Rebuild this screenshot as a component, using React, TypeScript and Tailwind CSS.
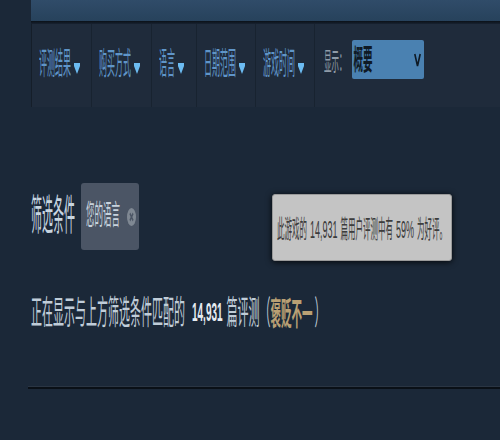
import React from "react";

const font = "font-['Liberation_Sans','Noto_Sans_CJK_SC',sans-serif]";

const tabs = [
  { label: "评测结果", w: "w-[60px]" },
  { label: "购买方式", w: "w-[60px]" },
  { label: "语言", w: "w-[45px]" },
  { label: "日期范围", w: "w-[59px]" },
  { label: "游戏时间", w: "w-[59px]" },
];

const Caret = () => (
  <svg width="6" height="11" viewBox="0 0 6 11" className="ml-[3px] mt-[5px]">
    <polygon points="0,0 6,0 6,3 3,11 0,3" fill="#6cbcf2" />
  </svg>
);

const FilterBar: React.FC = () => (
  <div className="ml-[31px]">
    <div className="h-[21px] bg-linear-to-b from-[#304c69] to-[#27425c]" />
    <div className="h-[3px] bg-linear-to-b from-[#0b1118] to-[#172231]" />
    <div className="flex h-[83px] bg-[#1f2b3b] border-l border-[#151e29]">
      {tabs.map((t) => (
        <div
          key={t.label}
          className={`${t.w} flex items-center pl-[7px] border-r border-[#182330]`}
        >
          <span className="inline-block text-[8px] leading-none scale-y-[3.8] text-[#5f95c8]">
            {t.label}
          </span>
          <Caret />
        </div>
      ))}
      <span className="ml-[9px] mt-[-5px] self-center inline-block text-[7.5px] leading-none scale-y-[3.5] text-[#8f9ba7]">
        显示：
      </span>
      <div className="ml-[5px] mt-[16px] self-start w-[72px] h-[39px] rounded-[2px] bg-[#4a81b1] flex items-center justify-between pl-[2px] pr-[3px]">
        <span className="inline-block text-[9.5px] font-bold leading-none scale-y-[3] text-[#0f1a25]">
          概要
        </span>
        <svg width="7" height="14" viewBox="0 0 7 14">
          <polyline points="0.8,1 3.5,13 6.2,1" fill="none" stroke="#0f1a25" strokeWidth="1.6" />
        </svg>
      </div>
    </div>
  </div>
);

const App: React.FC = () => {
  return (
    <div className={`relative w-[500px] h-[440px] overflow-hidden bg-[#1b2838] ${font}`}>
      <FilterBar />

      <div className="pl-[31px]">
        <div className="mt-[76px] flex items-center h-[67px]">
          <span className="inline-block text-[11px] leading-none scale-y-[3.8] text-[#c7d5e0]">
            筛选条件
          </span>
          <div className="ml-[6px] w-[58px] h-[67px] rounded-[3px] bg-[#4b5565] flex items-center pl-[5px]">
            <span className="inline-block text-[8.5px] leading-none scale-y-[3.3] text-[#c8d3dd]">
              您的语言
            </span>
            <svg width="9" height="18" viewBox="0 0 10 10" preserveAspectRatio="none" className="ml-[7px]">
              <circle cx="5" cy="5" r="5" fill="#7f8893" />
              <path d="M3.2 3 L6.8 7 M6.8 3 L3.2 7" stroke="#4b5565" strokeWidth="1.3" />
            </svg>
          </div>
        </div>

        <div className="mt-[49px] h-[28px] flex items-center">
          <span className="inline-block text-[11px] leading-none scale-y-[3] text-[#c0cdd9]">
            正在显示与上方筛选条件匹配的
          </span>
          <span className="ml-[7px] inline-block text-[10px] font-bold leading-none scale-y-[2.5] text-[#e6ecf2]">
            14,931
          </span>
          <span className="ml-[4px] inline-block text-[11px] leading-none scale-y-[3] text-[#c0cdd9]">
            篇评测（
          </span>
          <span className="inline-block text-[10.5px] font-bold leading-none scale-y-[3] text-[#b9a074]">
            褒贬不一
          </span>
          <span className="ml-[2px] inline-block text-[11px] leading-none scale-y-[3] text-[#c0cdd9]">
            ）
          </span>
        </div>

        <div className="mt-[59px] -ml-[3px]">
          <div className="h-px bg-[#2a3543]" />
          <div className="h-[2px] bg-[#0a1017]" />
        </div>
      </div>

      <div className="absolute left-[272px] top-[194px] w-[180px] h-[67px] rounded-[3px] bg-[#c4c4c4] border border-[#9a9a9a] shadow-[0_1px_6px_rgba(0,0,0,0.85)] flex items-center justify-center pt-[7px]">
        <span className="inline-block text-[7.5px] leading-none scale-y-[3.3] text-[#3c3c3c]">
          此游戏的
        </span>
        <span className="ml-[3px] inline-block text-[9px] leading-none scale-y-[2.6] text-[#3c3c3c]">
          14,931
        </span>
        <span className="ml-[3px] inline-block text-[7.5px] leading-none scale-y-[3.3] text-[#3c3c3c]">
          篇用户评测中有
        </span>
        <span className="ml-[3px] inline-block text-[9px] leading-none scale-y-[2.6] text-[#3c3c3c]">
          59%
        </span>
        <span className="ml-[3px] inline-block text-[7.5px] leading-none scale-y-[3.3] text-[#3c3c3c]">
          为好评。
        </span>
      </div>
    </div>
  );
};

export default App;
